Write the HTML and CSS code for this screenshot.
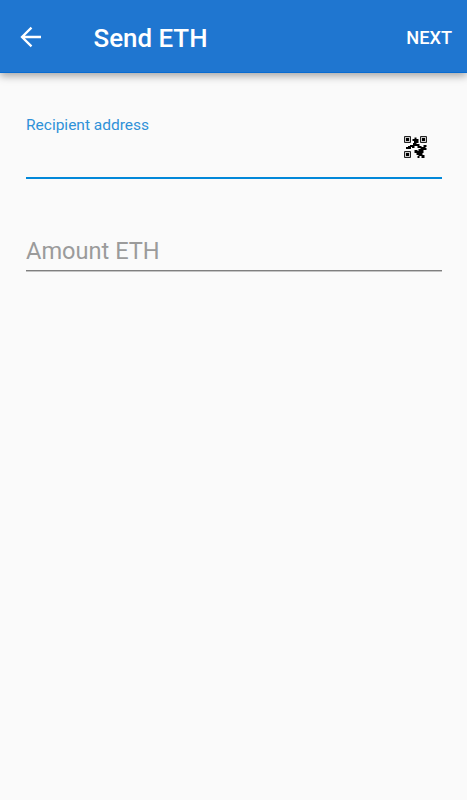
FILE: index.html
```html
<!DOCTYPE html>
<html lang="en">
<head>
  <meta charset="UTF-8">
  <title>Send ETH</title>
  <meta name="viewport" content="width=device-width, initial-scale=1.0">
  <link rel="stylesheet" href="styles.css">
</head>
<body>

<header class="toolbar">
  <button type="button" class="back-btn" aria-label="Back">
    <svg viewBox="0 0 22 22" width="22" height="22">
      <path d="M21 11H2.5M11.5 1.6L2 11L11.5 20.4" fill="none" stroke="currentColor" stroke-width="2.3"/>
    </svg>
  </button>
  <h1>Send ETH</h1>
  <button type="submit" form="sendForm" class="next-btn">NEXT</button>
</header>

<form id="sendForm" class="send-form">
  <div class="field address-field">
    <label for="address">Recipient address</label>
    <div class="input-row">
      <input type="text" id="address" name="address" autocomplete="off">
      <button type="button" class="scan-btn" aria-label="Scan QR code">
        <svg viewBox="0 0 23 23" width="23" height="23">
          <path fill="#ccc" stroke="#222" d="M.5.5h6v6h-6zM16.5.5h6v6h-6zM.5 15.5h6v6h-6z"/>
          <path d="M2 2h3v3H2zM18 2h3v3h-3zM2 17h3v3H2z"/>
          <path d="M8.5 3h2V1.5h2V3h2v4h-2v1h3v2h2v1h2V9h3v2h-1v1h1v2h-3v3h-1v2h2v3h-3v-2h-2v2h-2v-2h1v-1h-2v-2h-2v-3h3v1h1v-2h2v-1h-3v-2h-3v2H8v-1H7v2H2v-2h2v-1h2V9h3V7h1V5H8.5z"/>
        </svg>
      </button>
    </div>
  </div>

  <div class="field amount-field">
    <input type="text" id="amount" name="amount" inputmode="decimal" placeholder="Amount ETH" aria-label="Amount ETH">
  </div>
</form>

</body>
</html>
```

FILE: styles.css
```css
* {
  box-sizing: border-box;
}

body {
  font-family: Roboto, sans-serif;
  margin: 0;
  min-height: 100vh;
  background: #fafafa;
}

button {
  padding: 0;
  border: none;
  background: none;
  color: inherit;
  font-family: inherit;
  cursor: pointer;
}

svg {
  display: block;
}

.toolbar {
  display: flex;
  align-items: center;
  height: 73px;
  padding: 2px 15px 0 20px;
  background: #1f76d0;
  color: #fff;
  border-bottom: 1px solid #086bd0;
  box-shadow: 0 3px 8px rgba(0, 0, 0, 0.35);
}

h1 {
  flex: 1;
  margin: 0 0 0 51.5px;
  padding-top: 2px;
  font-size: 25.9px;
  font-weight: 500;
}

.next-btn {
  font-size: 18.2px;
  font-weight: 500;
}

.send-form {
  padding: 42px 25px 0 26px;
}

.field input {
  width: 100%;
  padding: 0;
  border: none;
  outline: none;
  background: none;
  font-family: inherit;
  font-size: 23.6px;
}

.field input::placeholder {
  color: #9b9b9b;
  opacity: 1;
}

.address-field {
  height: 64px;
  border-bottom: 2px solid #0288d9;
}

label {
  display: block;
  height: 19px;
  font-size: 15.5px;
  line-height: 21px;
  color: #2f91d8;
}

.input-row {
  display: flex;
  align-items: flex-start;
  padding-right: 15px;
}

.scan-btn {
  flex: none;
  margin-top: 2px;
}

.amount-field {
  height: 92px;
  padding-top: 58px;
  border-bottom: 1px solid #7f7f7f;
  box-shadow: 0 1px 0 #c4c4c4;
}
```
